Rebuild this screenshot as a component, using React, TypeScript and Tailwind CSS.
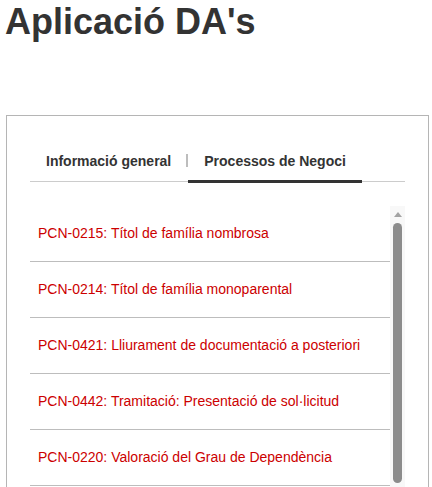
import React from 'react';

const processos = [
    'PCN-0215: Títol de família nombrosa',
    'PCN-0214: Títol de família monoparental',
    'PCN-0421: Lliurament de documentació a posteriori',
    'PCN-0442: Tramitació: Presentació de sol·licitud',
    'PCN-0220: Valoració del Grau de Dependència',
];

// Fake scrollbar column, drawn beside the list.
const ScrollBar = () => (
    <div className="w-[15px] shrink-0 bg-[#f8f8f8] flex flex-col items-center">
        <svg width="8" height="5" viewBox="0 0 8 5" className="mt-[6px]">
            <polygon points="4,0 8,5 0,5" fill="#a3a3a3" />
        </svg>
        <div className="mt-[6px] w-[9px] h-[260px] rounded-full bg-[#8c8c8c]" />
    </div>
);

const App: React.FC = () => {
    return (
        <div className="h-[487px] bg-white text-[#333] font-['Liberation_Sans',Arial,sans-serif] overflow-hidden">
            <h1 className="pl-[5px] text-[36px] leading-[43px] font-bold text-[#333]">Aplicació DA's</h1>

            <div className="mt-[72px] ml-[6px] mr-[3px] border border-[#b5b5b5] pt-[25px] px-[23px] pb-6 h-[420px]">
                <div className="flex items-end border-b border-[#cccccc]">
                    <button className="pl-4 pr-[15px] pt-[10px] pb-[9px] border-b-[3px] border-transparent -mb-[2px] text-[14px] leading-[20px] font-bold text-[#333]">
                        Informació general
                    </button>
                    <span className="w-[2px] h-[13px] bg-[#bdbdbd] mb-[14px]" />
                    <button className="px-4 pt-[10px] pb-[9px] border-b-[3px] border-[#333] -mb-[2px] text-[14px] leading-[20px] font-bold text-[#333]">
                        Processos de Negoci
                    </button>
                </div>

                <div className="mt-[24px] flex h-[290px] overflow-hidden">
                    <ul className="flex-1">
                        {processos.map(p => (
                            <li key={p} className="h-[56px] flex items-center pl-2 border-b border-[#bdbdbd] box-border">
                                <a className="text-[14px] leading-[20px] text-[#cc0000] pb-px">{p}</a>
                            </li>
                        ))}
                    </ul>
                    <ScrollBar />
                </div>
            </div>
        </div>
    );
};

export default App;
